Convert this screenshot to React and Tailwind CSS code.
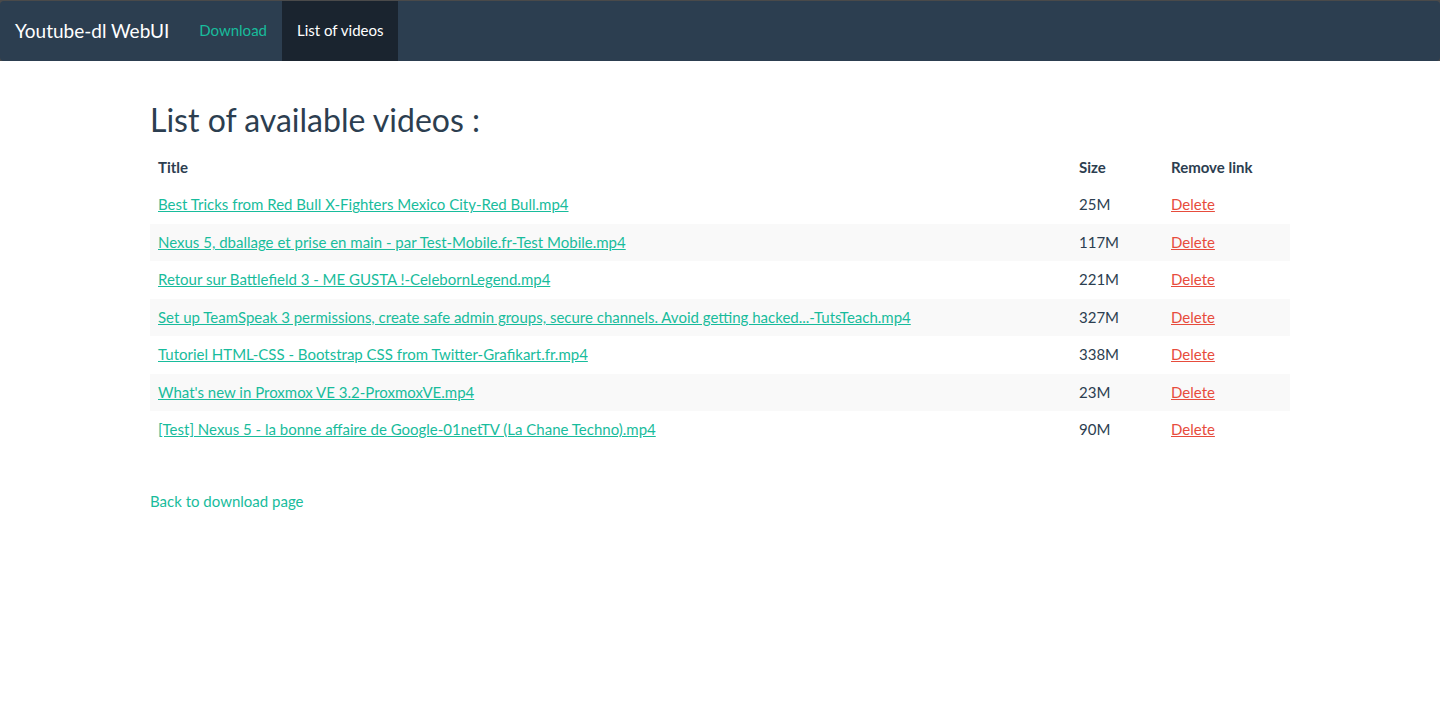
import React from "react";

const rows = [
  ["Best Tricks from Red Bull X-Fighters Mexico City-Red Bull.mp4", "25M"],
  ["Nexus 5, dballage et prise en main - par Test-Mobile.fr-Test Mobile.mp4", "117M"],
  ["Retour sur Battlefield 3 - ME GUSTA !-CelebornLegend.mp4", "221M"],
  ["Set up TeamSpeak 3 permissions, create safe admin groups, secure channels. Avoid getting hacked...-TutsTeach.mp4", "327M"],
  ["Tutoriel HTML-CSS - Bootstrap CSS from Twitter-Grafikart.fr.mp4", "338M"],
  ["What's new in Proxmox VE 3.2-ProxmoxVE.mp4", "23M"],
  ["[Test] Nexus 5 - la bonne affaire de Google-01netTV (La Chane Techno).mp4", "90M"],
];

export default function App() {
  return (
    <div className="min-h-[711px] bg-white text-[15px] leading-[21.43px] text-[#2c3e50]" style={{ fontFamily: "Lato, 'Open Sans', sans-serif" }}>
      <div className="bg-[#4a4a4a] pt-px">
        <nav className="flex h-[60px] items-stretch rounded-[4px] bg-[#2c3e50]">
          <a href="#" className="flex items-center px-[15px] text-[19px] text-white">Youtube-dl WebUI</a>
          <div className="flex items-stretch">
            <a href="#" className="flex items-center px-[15px] text-[#18bc9c]">Download</a>
            <a href="#" className="flex items-center bg-[#1a242f] px-[15px] text-white">List of videos</a>
          </div>
        </nav>
      </div>
      <div className="mx-auto w-[1170px] px-[15px]">
        <h1 className="mt-[37px] mb-[8px] text-[32px] leading-[43px] font-normal">List of available videos :</h1>
        <table className="w-full border-collapse">
          <thead>
            <tr>
              <th className="px-2 py-2 text-left font-bold">Title</th>
              <th className="w-[92px] px-2 py-2 text-left font-bold">Size</th>
              <th className="w-[127px] px-2 py-2 text-left font-bold">Remove link</th>
            </tr>
          </thead>
          <tbody>
            {rows.map(([t, s], i) => (
              <tr key={i} className={i % 2 === 1 ? "bg-[#f9f9f9]" : ""}>
                <td className="px-2 py-2"><a href="#" className="text-[#18bc9c] underline">{t}</a></td>
                <td className="px-2 py-2">{s}</td>
                <td className="px-2 py-2"><a href="#" className="text-[#e74c3c] underline">Delete</a></td>
              </tr>
            ))}
          </tbody>
        </table>
        <div className="mt-[42px]">
          <a href="#" className="text-[#18bc9c]">Back to download page</a>
        </div>
      </div>
    </div>
  );
}
